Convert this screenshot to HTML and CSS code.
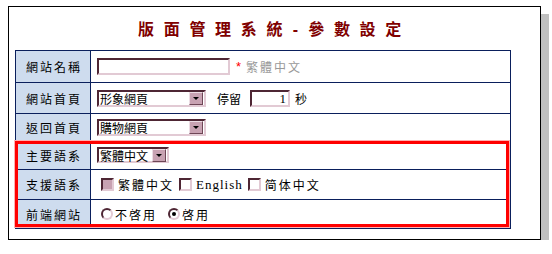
FILE: index.html
```html
<!DOCTYPE html>
<html lang="zh-Hant">
<head>
    <meta charset="UTF-8">
    <title>版面管理系統 - 參數設定</title>
    <link rel="stylesheet" href="styles.css">
</head>
<body>

    <div class="frame">
        <h1 class="title">版面管理系統<span class="dash">-</span>參數設定</h1>

        <div class="form">
            <div class="row row-name">
                <div class="label">網站名稱</div>
                <div class="field">
                    <span class="textbox wide"></span>
                    <span class="star">*</span>
                    <span class="hint">繁體中文</span>
                </div>
            </div>

            <div class="row row-home">
                <div class="label">網站首頁</div>
                <div class="field">
                    <span class="select">
                        <span class="value">形象網頁</span>
                        <span class="arrow"></span>
                    </span>
                    <span class="plain stay">停留</span>
                    <span class="textbox small">1</span>
                    <span class="plain">秒</span>
                </div>
            </div>

            <div class="row row-back">
                <div class="label">返回首頁</div>
                <div class="field">
                    <span class="select">
                        <span class="value">購物網頁</span>
                        <span class="arrow"></span>
                    </span>
                </div>
            </div>

            <!-- highlighted block -->
            <div class="group">
                <div class="row row-main">
                    <div class="label">主要語系</div>
                    <div class="field">
                        <span class="select short">
                            <span class="value">繁體中文</span>
                            <span class="arrow"></span>
                        </span>
                    </div>
                </div>

                <div class="row row-langs">
                    <div class="label">支援語系</div>
                    <div class="field opts">
                        <span class="check checked"></span>
                        <span class="opt">繁體中文</span>
                        <span class="check"></span>
                        <span class="opt latin">English</span>
                        <span class="check"></span>
                        <span class="opt">简体中文</span>
                    </div>
                </div>

                <div class="row row-front">
                    <div class="label">前端網站</div>
                    <div class="field opts">
                        <span class="radio"></span>
                        <span class="opt">不啓用</span>
                        <span class="radio on"></span>
                        <span class="opt">啓用</span>
                    </div>
                </div>
            </div>
        </div>
    </div>

</body>
</html>
```

FILE: styles.css
```css
body {
    margin: 0;
    background: #ffffff;
    font-family: "Noto Sans CJK TC", "Liberation Sans", sans-serif;
    font-size: 12px;
    color: #000000;
}

/* Outer frame with drop shadow */
.frame {
    box-sizing: border-box;
    width: 533px;
    height: 234px;
    margin: 6px 0 0 8px;
    padding: 0 6px;
    border: 1px solid #000000;
    box-shadow: 8px 8px 0 #c0c0c0;
}

.title {
    margin: 0;
    height: 43px;
    line-height: 43px;
    text-align: center;
    font-size: 16px;
    font-weight: bold;
    letter-spacing: 9.7px;
    color: #800000;
}

.title .dash {
    display: inline-block;
    width: 16px;
    text-align: center;
    font-family: "Liberation Sans", sans-serif;
}

/* Form table */
.form {
    width: 496px;
    box-sizing: border-box;
    border: 1px solid #0a1f5c;
}

.row {
    display: flex;
    border-bottom: 1px solid #0a1f5c;
}

.group .row-front {
    border-bottom: none;
}

.row-name { height: 31px; }
.row-home { height: 30px; }
.row-back { height: 26px; }
.row-main { height: 28px; }
.row-langs { height: 29px; }
.row-front { height: 28px; }

.label {
    box-sizing: border-box;
    width: 75px;
    flex-shrink: 0;
    display: flex;
    align-items: center;
    justify-content: center;
    padding-left: 2px;
    background-color: #cedcee;
    border-right: 1px solid #0a1f5c;
    letter-spacing: 2px;
}

.field {
    flex-grow: 1;
    display: flex;
    align-items: center;
    padding-left: 6px;
}

/* Red highlight around the language rows */
.group {
    position: relative;
}

.group::after {
    content: "";
    position: absolute;
    top: 0;
    left: -1px;
    right: 1px;
    bottom: 1px;
    border: 3px solid #ff0000;
    box-shadow: 0 0 0 1px #ffb0b0;
    pointer-events: none;
}

/* Inputs */
.textbox {
    box-sizing: border-box;
    height: 17px;
    border: 2px solid;
    border-color: #4e2634 #e2cad4 #e2cad4 #4e2634;
    background: #ffffff;
    font-family: "Liberation Serif", serif;
    font-size: 13px;
    line-height: 13px;
    text-align: right;
    padding-right: 2px;
}

.textbox.wide {
    width: 133px;
}

.textbox.small {
    width: 40px;
    margin: 0 5px 0 9px;
}

.star {
    color: #ff0000;
    margin-left: 6px;
    font-family: "Liberation Sans", sans-serif;
    font-size: 13px;
}

.hint {
    color: #999999;
    margin-left: 5px;
    letter-spacing: 2px;
}

.plain.stay {
    margin-left: 11px;
}

.select {
    box-sizing: border-box;
    width: 109px;
    height: 17px;
    display: flex;
    align-items: center;
    justify-content: space-between;
    border: 2px solid;
    border-color: #4e2634 #e2cad4 #e2cad4 #4e2634;
    background: #ffffff;
    padding: 0 1px 0 1px;
}

.select.short {
    width: 72px;
    height: 16px;
}

.select .value {
    line-height: 13px;
}

.arrow {
    box-sizing: border-box;
    width: 14px;
    height: 13px;
    background-color: #c8a2b2;
    border: 1px solid;
    border-color: #ecdce4 #6e4656 #6e4656 #ecdce4;
    display: flex;
    align-items: center;
    justify-content: center;
}

.arrow::after {
    content: "";
    border-left: 3px solid transparent;
    border-right: 3px solid transparent;
    border-top: 3px solid #000000;
    margin-top: 1px;
}

/* Checkboxes and radios */
.opts {
    padding-left: 10px;
}

.check {
    box-sizing: border-box;
    width: 13px;
    height: 13px;
    border: 2px solid;
    border-color: #4e2634 #e2cad4 #e2cad4 #4e2634;
    background: #ffffff;
}

.check.checked {
    background: #c8a2b2;
}

.opt {
    letter-spacing: 2px;
    margin: 0 5px 0 4px;
}

.opt.latin {
    font-family: "Liberation Serif", serif;
    font-size: 13px;
    letter-spacing: 1px;
}

.radio {
    box-sizing: border-box;
    width: 12px;
    height: 12px;
    border-radius: 50%;
    border: 2px solid;
    border-color: #4e2634 #e2cad4 #e2cad4 #4e2634;
    background: #ffffff;
    display: flex;
    align-items: center;
    justify-content: center;
    margin-right: -2px;
}

.radio.on::after {
    content: "";
    width: 4px;
    height: 4px;
    border-radius: 50%;
    background: #000000;
}

.radio + .opt {
    margin-left: 4px;
}

.radio.on {
    margin-left: 6px;
}
```
